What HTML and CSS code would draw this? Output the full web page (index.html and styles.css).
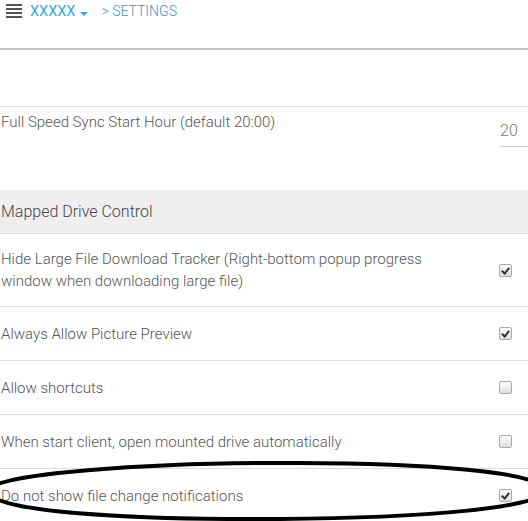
FILE: index.html
```html
<!DOCTYPE html>
<html>
<head>
<meta charset="utf-8">
<link rel="stylesheet" href="styles.css">
</head>
<body>
<header class="topbar">
  <span class="menu-icon"><i></i><i></i><i></i><i></i></span>
  <span class="account">XXXXX</span>
  <span class="caret"></span>
  <span class="crumb">&gt; SETTINGS</span>
</header>
<div class="spacer"></div>
<div class="row row-input">
  <div class="label">Full Speed Sync Start Hour (default 20:00)</div>
  <div class="hour">20</div>
</div>
<div class="section-title">Mapped Drive Control</div>
<div class="row tall">
  <div class="label">Hide Large File Download Tracker (Right-bottom popup progress window when downloading large file)</div>
  <span class="check on"></span>
</div>
<div class="row">
  <div class="label">Always Allow Picture Preview</div>
  <span class="check on"></span>
</div>
<div class="row">
  <div class="label">Allow shortcuts</div>
  <span class="check"></span>
</div>
<div class="row">
  <div class="label">When start client, open mounted drive automatically</div>
  <span class="check"></span>
</div>
<div class="row last">
  <div class="label">Do not show file change notifications</div>
  <span class="check on"></span>
  <svg class="circle" width="528" height="70" viewBox="0 0 528 70">
    <path d="M 300 3 C 420 3, 545 12, 545 30 C 545 48, 420 58, 280 59 C 130 60, -10 52, -12 31 C -12 14, 150 2, 300 3 Z" fill="none" stroke="#000" stroke-width="4"/>
  </svg>
</div>
</body>
</html>
```
FILE: styles.css
```css
html, body {
  margin: 0;
  padding: 0;
  background: #fff;
  overflow: hidden;
}
body {
  font-family: Roboto, "Liberation Sans", sans-serif;
  font-weight: 300;
  font-size: 15px;
  color: #555;
  width: 528px;
  height: 521px;
  position: relative;
}
.topbar {
  border-bottom: 2px solid #c4c4c4;
  display: flex;
  align-items: flex-start;
  padding: 3px 0 0 6px;
  box-sizing: border-box;
  height: 50px;
}
.menu-icon {
  display: flex;
  flex-direction: column;
  gap: 2px;
  width: 16px;
  margin-top: 1px;
}
.menu-icon i {
  display: block;
  height: 2px;
  background: #555;
}
.account {
  margin-left: 8px;
  color: #2ea8ec;
  font-size: 14.5px;
  font-weight: 400;
  line-height: 17px;
}
.caret {
  width: 0;
  height: 0;
  border-left: 4px solid transparent;
  border-right: 4px solid transparent;
  border-top: 4px solid #2ea8ec;
  margin: 9px 0 0 5px;
}
.crumb {
  margin-left: 13px;
  color: #3a8fd6;
  font-size: 14px;
  font-weight: 300;
  line-height: 17px;
}
.spacer {
  height: 56px;
  border-bottom: 1px solid #dcdcdc;
}
.row {
  display: flex;
  align-items: center;
  justify-content: space-between;
  height: 53px;
  border-bottom: 1px solid #dcdcdc;
  padding: 0 16px 0 1px;
  position: relative;
}
.row.tall {
  height: 72px;
}
.row.last {
  border-bottom: none;
}
.label {
  line-height: 22px;
  max-width: 450px;
}
.row-input {
  height: 83px;
  border-bottom: none;
  align-items: flex-start;
  padding-right: 0;
}
.row-input .label {
  margin-top: 4px;
}
.hour {
  margin-top: 13px;
  width: 28px;
  padding: 2px 0 6px 0;
  border-bottom: 1px solid #cfcfcf;
  font-size: 16px;
  color: #777;
  line-height: 18px;
}
.section-title {
  background: #efefef;
  height: 43px;
  line-height: 43px;
  padding-left: 1px;
  border-bottom: 1px solid #dcdcdc;
  color: #444;
  font-size: 16px;
  font-weight: 300;
}
.check {
  width: 11px;
  height: 11px;
  border: 1px solid #a9a9a9;
  border-radius: 2px;
  background: linear-gradient(#fcfcfc, #dedede);
  position: relative;
}
.check.on::after {
  content: "";
  position: absolute;
  left: 3px;
  top: 1px;
  width: 3px;
  height: 6px;
  border-right: 2px solid #333;
  border-bottom: 2px solid #333;
  transform: rotate(40deg);
}
.circle {
  position: absolute;
  left: 0;
  top: -9px;
  pointer-events: none;
}
```
